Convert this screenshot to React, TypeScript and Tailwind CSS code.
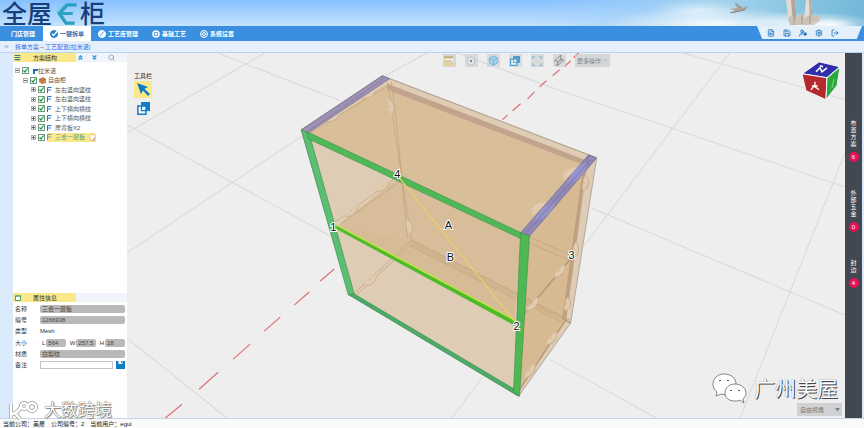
import { useState } from "react";
import {
  Box,
  ChevronDown,
  ChevronsDown,
  ChevronsUp,
  FileText,
  LogOut,
  Menu,
  Save,
  Scan,
  Search,
  Settings,
  UserCog,
} from "lucide-react";

const menuItems = ["门店管理", "一键拆单", "工艺库管理", "基础工艺", "系统设置"];

const treeItems = ["左右竖向竖纹", "左右竖向竖纹", "上下横向横纹", "上下横向横纹", "厚背板X2", "三合一层板"];

const sideTabs = [
  { label: "布置方案", count: 6 },
  { label: "外部五金", count: 0 },
  { label: "封边", count: 4 },
];

const gridLines = [
  "M218 53 341 101",
  "M266 53 128 133",
  "M128 125 331 236",
  "M303 136 128 253",
  "M128 338 228 418",
  "M428 53 386 76",
  "M457 53 547 86 845 187",
  "M730 53 585 245",
  "M683 53 845 100",
  "M592 208 845 315",
  "M845 153 740 418",
  "M550 359 657 418",
  "M483 377 452 418",
];

const axisDashes = [
  "M335 269 321 281",
  "M310 292 295 305",
  "M281 317 265 331",
  "M251 344 234 359",
  "M219 372 200 389",
  "M183 404 166 418",
  "M579 53 574 58",
  "M571 61 565 67",
  "M560 70 553 76",
  "M547 81 540 87",
  "M535 92 528 99",
  "M521 104 513 111",
  "M508 115 503 120",
];

// x, y, rotation and half length of every connector
const connectors = [
  [333, 117, -28, 9],
  [369, 94, -28, 9],
  [352, 211, -36, 9],
  [383, 186, -36, 9],
  [371, 280, -40, 8],
  [391, 107, -100, 8],
  [409, 227, -100, 7],
  [560, 271, -48, 8],
  [533, 304, -48, 9],
  [552, 338, -52, 8],
  [530, 371, -52, 9],
  [585, 183, -80, 8],
  [575, 250, -80, 8],
  [567, 304, -80, 7],
];

const marks = [
  { text: "1", x: 334, y: 230 },
  { text: "2", x: 517, y: 329 },
  { text: "3", x: 572, y: 258 },
  { text: "4", x: 398, y: 177 },
  { text: "A", x: 449, y: 228 },
  { text: "B", x: 451, y: 260 },
];

const Cabinet = () => (
  <svg className="absolute inset-0 h-full w-full" viewBox="128 53 717 365" preserveAspectRatio="xMidYMid slice">
    <g stroke="#d9d9d9" fill="none">
      {gridLines.map((d) => (
        <path key={d} d={d} />
      ))}
    </g>
    <g stroke="#e07070" strokeWidth="1.2" fill="none">
      {axisDashes.map((d) => (
        <path key={d} d={d} />
      ))}
    </g>

    {/* Outer body */}
    <path d="M302 130 383 76 597 158 571 323 519 396 350 295Z" fill="#dfccb4" stroke="#a39a96" strokeWidth="0.8" />
    <path d="M310 133 388 84 588 161 522 233Z" fill="#d9be9a" />
    <path d="M398 178 522 239 515 322 337 227Z" fill="#d8bd9a" />
    <path d="M530 237 583 174 565 321 520 388Z" fill="#d7ba91" />
    <path d="M337 227 412 241 515 293 515 325Z" fill="#d6ba95" opacity="0.6" />

    {/* Back panel */}
    <path d="M388 84 588 161 584 165 388 90Z" fill="#c2a38d" />
    <path d="M388 78 597 158" stroke="#b89f87" strokeWidth="0.6" />
    <g stroke="#c0a181" strokeWidth="0.8" fill="none" opacity="0.85">
      <path d="M388 82 412 240 570 320" />
      <path d="M392 82 398 130 408 238 M411 246 562 322" />
      <path d="M353 295 412 240 M357 295 410 246" />
      <path d="M336 222 400 175 M341 224 404 179" />
      <path d="M311 133 389 86" />
      <path d="M530 237 573 256 M530 243 571 261" />
    </g>
    <path d="M412 240 570 320 566 322 411 246Z" fill="#bd9c78" opacity="0.25" />
    <path d="M584 166 587 165 566 321 563 319Z" fill="#c0a182" stroke="#ab8f77" strokeWidth="0.4" />
    <g stroke="#b59675" strokeWidth="1.4" fill="none">
      <path d="M517 323 574 255" />
      <path d="M519 391 566 320 571 323" />
    </g>

    {connectors.map(([x, y, angle, r]) => (
      <g key={`${x}-${y}`} transform={`translate(${x} ${y}) rotate(${angle})`}>
        <path d={`M${-r} 1 Q0 8 ${r} 1Z`} fill="#cbb08e" />
        <path d={`M${-r} 0 Q-3 -3 0 -1 Q3 -3 ${r} 0 Q0 7 ${-r} 0Z`} fill="#e0cbb0" />
        <circle r="0.6" fill="#c7ab88" />
      </g>
    ))}

    {/* Side edges */}
    <path d="M302 130 383 76 390 79 309 133Z" fill="#9d92b3" stroke="#776f93" strokeWidth="0.8" />
    <path d="M383 76V80L308 132" stroke="#776f93" strokeWidth="0.5" fill="none" />
    <path d="M572 168Q562 171 564 180L583 166Z M540 203Q530 206 533 216L549 202Z" fill="#e0cbb0" />
    <path d="M521 233 589 155 597 158 530 236Z" fill="#9188b5" stroke="#716a98" strokeWidth="0.8" />
    <path d="M566 184Q576 184 585 172L588 162 578 166Z M533 221Q545 220 553 209L556 202 544 207Z" fill="#9794cb" />
    <path d="M525 235 591 160 M589 155 587 163" stroke="#716a98" strokeWidth="0.7" />

    {/* Front frame */}
    <g stroke="#3a8a4b" strokeWidth="0.6">
      <path d="M302 130 310 134 355 294 349 295Z" fill="#5bbf73" />
      <path d="M350 295 355 294 515 389 519 396Z" fill="#49ad68" />
      <path d="M308 132 522 233 522 239 309 139Z" fill="#4fb957" />
      <path d="M521 233 530 236 520 396 514 391Z" fill="#4eb852" />
    </g>
    <path d="M337 225 517 321 516 326 337 229Z" fill="#4dbb2c" />
    <path d="M337 225 517 321" stroke="#c5e83a" strokeWidth="1.3" />
    <path d="M400 178 515 321" stroke="#e8cf6a" strokeWidth="1.3" />

    <g
      className="font-['Liberation_Sans','Noto_Sans_CJK_SC',sans-serif] text-[11px]"
      fill="#111"
      stroke="#fff"
      strokeWidth="2"
      paintOrder="stroke"
      textAnchor="middle"
    >
      {marks.map((mark) => (
        <text key={mark.text} x={mark.x} y={mark.y + 1}>
          {mark.text}
        </text>
      ))}
    </g>

    {/* View cube */}
    <g stroke="#f4f4ff" strokeWidth="1" strokeLinejoin="round">
      <path d="M802 74 819 62 840 67 827 78Z" fill="#2f2fa8" />
      <path d="M802 74 827 78 826 100 806 91Z" fill="#b42a2c" />
      <path d="M827 78 840 67 837 86 826 100Z" fill="#2ba83a" />
    </g>
    <path d="M816 72 820 68 822 72 827 68 M820 66 823 67" stroke="#fff" strokeWidth="1.6" fill="none" />
    <path d="M811 90 814 86 819 90 M812 86 818 86 M815 82V88" stroke="#fff" strokeWidth="1.3" fill="none" />
    <path d="M832 88 834 79" stroke="#9be3a2" strokeWidth="0.8" />
  </svg>
);

const SkyArt = () => (
  <svg className="h-[26px] w-[330px]" viewBox="0 0 330 26" preserveAspectRatio="none">
    <defs>
      <linearGradient id="sky" x1="0" x2="1">
        <stop offset="0" stopColor="#9fd0fb" stopOpacity="0" />
        <stop offset="0.55" stopColor="#a5d3ee" />
        <stop offset="1" stopColor="#73b9d8" />
      </linearGradient>
      <radialGradient id="cloud">
        <stop offset="0" stopColor="#fff" stopOpacity="0.9" />
        <stop offset="1" stopColor="#fff" stopOpacity="0" />
      </radialGradient>
    </defs>
    <rect width="330" height="26" fill="url(#sky)" />
    <ellipse cx="180" cy="24" rx="110" ry="17" fill="url(#cloud)" />
    <ellipse cx="165" cy="10" rx="50" ry="10" fill="url(#cloud)" opacity="0.6" />
    <ellipse cx="275" cy="24" rx="70" ry="12" fill="url(#cloud)" />
    <path d="M195 9 203 8 201 3 208 8 214 6 212 10 203 12 196 13 201 10Z" fill="#a9a59c" />
    <path d="M201 3 208 8M196 13 211 10" stroke="#827e78" strokeWidth="0.8" />
    <path d="M252 0h9l2 25h-8Z" fill="#e3d9d0" />
    <path d="M257 0h4l2 25h-4Z" fill="#b3a59b" />
    <path d="M272 0h5l2 22h-9Z" fill="#e4ddd5" />
    <path d="M275 0h2l2 22h-3Z" fill="#b7aba1" />
    <path d="M254 18l4-3 4 4 5-6 4 5 5-4 3 3 6-2 1 6-6 4h-24Z" fill="#cdc1b4" />
    <path d="M260 17v8M268 15v9M276 16v8" stroke="#9b8f85" strokeWidth="0.8" />
    <ellipse cx="298" cy="25" rx="25" ry="7" fill="url(#cloud)" />
  </svg>
);

const MenuIcon = ({ index, active }: { index: number; active: boolean }) => (
  <svg
    className={`h-[8px] w-[8px] ${active ? "text-[#2484cf]" : "text-white"}`}
    viewBox="0 0 16 16"
    fill="none"
    stroke="currentColor"
    strokeWidth="2"
  >
    {index === 1 && (
      <>
        <circle cx="8" cy="8" r="7" fill="currentColor" />
        <path d="M4 7 7 11 14 3" stroke="#fff" strokeWidth="2.5" />
      </>
    )}
    {index === 2 && (
      <>
        <circle cx="8" cy="8" r="7" fill="currentColor" />
        <path d="M5 12 6 9 12 3" stroke="#3a8fe0" />
      </>
    )}
    {index === 3 && (
      <>
        <circle cx="8" cy="8" r="6" strokeWidth="3" />
        <circle cx="8" cy="8" r="2" fill="currentColor" />
      </>
    )}
    {index === 4 && (
      <>
        <circle cx="8" cy="8" r="7" />
        <circle cx="8" cy="8" r="3" />
        <path d="M8 3v2M8 11v2M3 8h2M11 8h2" />
      </>
    )}
  </svg>
);

const CopyIcon = ({ className }: { className: string }) => (
  <svg className={className} viewBox="0 0 16 16">
    <path d="M5 0h11v11H5Z" fill="#0f7cc4" />
    <path d="M1 5h10v10H1Z" fill="#eef5fb" stroke="#0f7cc4" strokeWidth="1.8" />
    <path d="M5.5 5h5.5v5.5H5.5Z" fill="#eef5fb" stroke="#0f7cc4" strokeWidth="1.5" />
  </svg>
);

const TreeCheck = ({ label }: { label: string }) => {
  const [checked, setChecked] = useState(true);
  return (
    <span className="relative h-[7px] w-[7px] shrink-0">
      <input
        type="checkbox"
        aria-label={label}
        checked={checked}
        onChange={() => setChecked(!checked)}
        className="block h-[7px] w-[7px] appearance-none border border-[#6f9a7c] bg-white"
      />
      {checked && (
        <svg className="pointer-events-none absolute inset-0 h-[7px] w-[7px]" viewBox="0 0 7 7">
          <path d="M1.5 3.5 3 5 5.5 1.5" fill="none" stroke="#159447" strokeWidth="1.2" />
        </svg>
      )}
    </span>
  );
};

const Expander = ({ open }: { open?: boolean }) => (
  <button aria-label="展开" className="flex h-[5px] w-[5px] shrink-0 items-center justify-center border border-[#b0b0b0] bg-white">
    <svg viewBox="0 0 5 5" className="h-[5px] w-[5px] shrink-0">
      <path d={open ? "M1 2.5h3" : "M1 2.5h3M2.5 1v3"} stroke="#666" />
    </svg>
  </button>
);

const fieldClass = "h-[8px] min-w-0 rounded-[2px] bg-[#b9b9b9] px-[2px] text-[6px] leading-none text-[#444]";

const App = () => {
  const [activeMenu, setActiveMenu] = useState(1);
  const [selected, setSelected] = useState(5);

  return (
    <div className="flex min-h-screen flex-col bg-[#dcebfc] font-['Liberation_Sans','Noto_Sans_CJK_SC',sans-serif] text-[6px] leading-none text-[#333]">
      {/* Banner */}
      <header className="flex h-[26px] items-center justify-between bg-gradient-to-b from-[#86c0fe] to-[#c4e2fd]">
        <h1 className="flex items-center pl-[2px] pt-[2px] text-[25px] font-medium leading-[24px] text-[#173f7c]">
          <span>全屋</span>
          <svg className="ml-[3px] mr-px h-[22px] w-[24px]" viewBox="0 0 24 23" role="img" aria-label="E">
            <path d="M2 11 12 1H8L1 9Z" fill="#7cc8e0" />
            <path d="M22 2H12L4 11 11 21H20" fill="none" stroke="#2a9fc0" strokeWidth="3.5" />
            <path d="M6 11H18" stroke="#2a9fc0" strokeWidth="3" />
          </svg>
          <span>柜</span>
        </h1>
        <SkyArt />
      </header>

      {/* Main menu */}
      <nav className="flex h-[15px] justify-between bg-[#3a8fe0]">
        <div className="flex">
          {menuItems.map((item, index) => (
            <button
              key={item}
              onClick={() => setActiveMenu(index)}
              className={`flex items-center gap-[2px] font-bold ${index === 0 ? "pl-[11px] pr-[8px]" : "px-[7px]"} ${
                activeMenu === index ? "bg-white text-[#2b6fb5]" : "text-white"
              }`}
            >
              {index > 0 && <MenuIcon index={index} active={activeMenu === index} />}
              {item}
            </button>
          ))}
        </div>
        <div className="mr-[2px] flex h-[13px] w-[105px] items-center gap-[8px] bg-[#e4effc] pl-[10px] text-[#2378bd] [clip-path:polygon(0_0,100%_0,95%_100%,5%_100%)]">
          <button aria-label="文档"><FileText className="h-[8px] w-[8px]" strokeWidth={2.5} /></button>
          <button aria-label="保存"><Save className="h-[8px] w-[8px]" strokeWidth={2.5} /></button>
          <button aria-label="用户"><UserCog className="h-[8px] w-[8px]" strokeWidth={3} /></button>
          <button aria-label="设置"><Settings className="h-[8px] w-[8px]" strokeWidth={3} /></button>
          <button aria-label="退出"><LogOut className="h-[8px] w-[8px]" strokeWidth={2.5} /></button>
        </div>
      </nav>

      <div className="flex h-[12px] items-center border-b border-[#bcd3ee] bg-[#e6f0fd]">
        <button aria-label="展开侧栏" className="w-[13px] text-[8px] text-[#7aa7d8]">»</button>
        <div className="flex items-center pl-[2px] text-[#3b62e0]">
          <a href="#plan">拆单方案</a>
          <span className="text-black">→</span>
          <a href="#craft">工艺配置[拉米诺]</a>
        </div>
      </div>

      <main className="flex flex-1">
        {/* Left panel */}
        <aside className="relative ml-[13px] flex w-[114px] shrink-0 flex-col bg-white">
          <section className="flex-1">
            <div className="flex h-[9px] items-center bg-[#f1f5fb]">
              <h2 className="flex h-full w-[63px] items-center gap-[12px] bg-[#fbe88a] pl-px">
                <Menu className="h-[7px] w-[7px] text-[#267f8f]" strokeWidth={4} />
                方案结构
              </h2>
              <button aria-label="收起" className="ml-px"><ChevronsUp className="h-[7px] w-[7px] text-[#2795dd]" strokeWidth={4} /></button>
              <button aria-label="展开" className="ml-[7px]"><ChevronsDown className="h-[7px] w-[7px] text-[#2795dd]" strokeWidth={4} /></button>
              <button aria-label="搜索" className="ml-[10px]"><Search className="h-[7px] w-[7px] text-[#a0a0a0]" strokeWidth={3} /></button>
            </div>
            <ul className="mt-[4px] grid h-[76px] auto-rows-fr text-[#555]">
              <li className="flex items-center gap-[2px] pl-[2px]">
                <Expander open />
                <TreeCheck label="拉米诺" />
                <span className="flex items-center">
                  <svg className="ml-[2px] h-[6px] w-[5px]" viewBox="0 0 5 6"><path d="M0 1h5v2H2v3H0Z" fill="#1670c4" /></svg>
                  拉米诺
                </span>
              </li>
              <li className="flex items-center gap-[2px] pl-[10px]">
                <Expander open />
                <TreeCheck label="自由柜" />
                <svg className="h-[7px] w-[7px]" viewBox="0 0 7 7"><path d="M0 2 4 0 7 2v4L3 7 0 5Z" fill="#c98b4b" /><path d="M0 2 3 3 7 2M3 3v4" stroke="#8e5a2a" strokeWidth="0.5" fill="none" /></svg>
                自由柜
              </li>
              {treeItems.map((item, index) => (
                <li key={index} className="flex items-center gap-[2px] pl-[18px]">
                  <Expander />
                  <TreeCheck label={item} />
                  <button
                    onClick={() => setSelected(index)}
                    className={`flex h-full items-center gap-[3px] ${selected === index ? "bg-[#fbe88a] text-[#5e9c80]" : ""}`}
                  >
                    <svg className="h-[6px] w-[5px]" viewBox="0 0 5 6"><path d="M.5 6V.5H4.5M.5 3H4" fill="none" stroke={selected === index ? "#7c93a8" : "#2a6fd8"} /></svg>
                    {item}
                    {selected === index && (
                      <svg className="ml-px h-[7px] w-[7px]" viewBox="0 0 7 7"><path d="M1 .5h3l2 2v4H1Z" fill="#fff" stroke="#d9a77a" strokeWidth="0.6" /><path d="M3.5 6.5 6 4" stroke="#d86a4a" /></svg>
                    )}
                  </button>
                </li>
              ))}
            </ul>
          </section>

          <section className="h-[125px]">
            <div className="h-[9px] bg-[#f1f5fb]">
              <h2 className="flex h-full w-[63px] items-center gap-[12px] bg-[#fbe88a] pl-[2px]">
                <svg className="h-[6px] w-[6px]" viewBox="0 0 6 6"><path d="M.5 1h5v4.5h-5Z" fill="#fff" stroke="#49a05b" /><path d="M0 1h6" stroke="#49a05b" /></svg>
                属性信息
              </h2>
            </div>
            <form className="mt-px grid h-[68px] auto-rows-fr grid-cols-1 px-[2px]">
              <label className="flex items-center"><span className="w-[25px] shrink-0">名称</span><input className={`${fieldClass} flex-1`} defaultValue="三合一层板" /></label>
              <label className="flex items-center"><span className="w-[25px] shrink-0">编号</span><input className={`${fieldClass} flex-1`} defaultValue="1266938" /></label>
              <div className="flex items-center"><span className="w-[25px] shrink-0">类型</span><span>Mesh</span></div>
              <div className="flex items-center">
                <span className="w-[25px] shrink-0">大小</span>
                <div className="flex flex-1 justify-between pl-[2px]">
                  <label className="flex items-center gap-px">L<input className={`${fieldClass} w-[20px]`} defaultValue="564" /></label>
                  <label className="flex items-center gap-px">W<input className={`${fieldClass} w-[20px]`} defaultValue="257.5" /></label>
                  <label className="flex items-center gap-px">H<input className={`${fieldClass} w-[20px]`} defaultValue="18" /></label>
                </div>
              </div>
              <label className="flex items-center"><span className="w-[25px] shrink-0">材质</span><input className={`${fieldClass} flex-1`} defaultValue="白梨纹" /></label>
              <div className="flex items-center">
                <label htmlFor="remark" className="w-[25px] shrink-0">备注</label>
                <input id="remark" className="h-[8px] min-w-0 flex-1 border border-[#c4c4c4] bg-white" />
                <button type="button" aria-label="保存备注" className="ml-[3px] shrink-0">
                  <svg className="h-[8px] w-[9px]" viewBox="0 0 9 8"><path d="M0 0h9v8H0Z" fill="#0f7cc4" /><path d="M2.5 0h4v3h-4Z" fill="#fff" /><path d="M5 0h1v2H5Z" fill="#0f7cc4" /></svg>
                </button>
              </div>
            </form>
          </section>

          {/* Brand mark over the panel */}
          <div className="pointer-events-none absolute -bottom-[3px] -left-[4px] z-10 flex items-center gap-[6px] whitespace-nowrap text-[17px] leading-[20px] text-white [text-shadow:0_0_1px_#666,0_0_1px_#666,1px_1px_1px_#888]">
            <svg className="h-[20px] w-[29px] overflow-visible" viewBox="0 0 29 20" fill="none">
              <g stroke="#999" strokeWidth="4">
                <path d="M2 3v14M3 13C9 12 11 8 12 5M6 12l5 6" />
                <circle cx="15" cy="5" r="3" /><circle cx="23" cy="6" r="4" />
              </g>
              <g stroke="#fff" strokeWidth="2.5">
                <path d="M2 3v14M3 13C9 12 11 8 12 5M6 12l5 6" />
                <circle cx="15" cy="5" r="3" /><circle cx="23" cy="6" r="4" />
              </g>
            </svg>
            大数跨境
          </div>
        </aside>

        {/* 3D view */}
        <section className="relative min-w-0 flex-1 overflow-hidden bg-[#eeeeee]">
          <Cabinet />

          <div className="absolute left-[7px] top-[20px] flex w-[18px] flex-col items-center gap-[2px]">
            <span className="whitespace-nowrap text-[#222]">工具栏</span>
            <button aria-label="选择" className="flex h-[17px] w-[18px] items-center justify-center bg-[#fbe88a]">
              <svg className="h-[13px] w-[13px]" viewBox="0 0 13 13"><path d="M0 0 11 4 7.5 6 13 11 11 13 6 7.5 4 11Z" fill="#0f7cc4" /></svg>
            </button>
            <button aria-label="复制" className="flex h-[17px] w-[18px] items-center justify-center">
              <CopyIcon className="h-[13px] w-[13px]" />
            </button>
          </div>

          <div className="absolute left-[44%] top-px flex gap-[9px] text-[#6aa9cc] opacity-70">
            <button aria-label="打开" className="flex h-[13px] w-[13px] items-center justify-center rounded-[1px] bg-[#cdcfcb]">
              <svg className="h-[10px] w-[10px]" viewBox="0 0 10 10"><path d="M0 1h9v9H0Z" fill="#e3c978" /><path d="M1 3h8v3H1Z" fill="#fff" /><path d="M0 1h9M1 5h7" stroke="#8a7744" /></svg>
            </button>
            <button aria-label="定位" className="flex h-[13px] w-[13px] items-center justify-center rounded-[1px] bg-[#cdd3d3]">
              <svg className="h-[10px] w-[10px]" viewBox="0 0 10 10"><circle cx="5" cy="5" r="4" fill="#e5e8e8" stroke="#9aa9b0" strokeWidth="0.8" /><circle cx="5" cy="5" r="1.2" fill="#557" /></svg>
            </button>
            <button aria-label="模型" className="flex h-[13px] w-[13px] items-center justify-center rounded-[1px] bg-[#cdd3d3]">
              <Box className="h-[11px] w-[11px] fill-[#8cc9ea] text-[#369bd0]" />
            </button>
            <button aria-label="复制视图" className="flex h-[13px] w-[13px] items-center justify-center rounded-[1px] bg-[#cdd3d3]">
              <CopyIcon className="h-[10px] w-[10px]" />
            </button>
            <button aria-label="全屏" className="flex h-[13px] w-[13px] items-center justify-center rounded-[1px] bg-[#cdd3d3]">
              <Scan className="h-[12px] w-[12px]" strokeWidth={2.5} />
            </button>
            <button aria-label="切割" className="flex h-[13px] w-[13px] items-center justify-center rounded-[1px] bg-[#cdd3d3]">
              <svg className="h-[12px] w-[12px]" viewBox="0 0 12 12" fill="none" stroke="#666"><path d="M8 0 1 6H5L4 11 11 5H7L8 0M3 10 9 3" /></svg>
            </button>
            <button className="flex h-[13px] items-center gap-[2px] rounded-[1px] bg-[#cbcdcd] px-[2px] text-[#555]">
              更多操作
              <ChevronDown className="h-[5px] w-[5px] text-[#4a94b5]" strokeWidth={3} />
            </button>
          </div>

          <div className="absolute bottom-[2px] right-[3px]">
            <select aria-label="视角" className="block h-[13px] w-[45px] appearance-none bg-[#d0d1d2] pl-[3px] text-[6px] text-[#777]">
              <option>自由视角</option>
            </select>
            <svg className="pointer-events-none absolute right-[2px] top-[5px] h-[4px] w-[5px]" viewBox="0 0 5 4"><path d="M0 0h5L2.5 3.5Z" fill="#70849a" /></svg>
          </div>

          <div className="pointer-events-none absolute bottom-[13px] right-[7px] flex items-center gap-[7px] text-[21px] leading-[32px] text-white [text-shadow:1px_1px_0_#444,0_0_1px_#777]">
            <svg className="h-[32px] w-[35px]" viewBox="0 0 35 32" fill="#fff" stroke="#555" strokeWidth="0.7">
              <path d="M12 1C5 1 1 6 1 11c0 4 2 6 4 8l-1 4 5-2c3 1 6 1 8 0 5-2 7-6 7-10C24 5 19 1 12 1Z" />
              <path d="M23 11c-6 0-10 4-10 9s4 8 10 8c2 0 4 0 5-1l4 3-1-4c2-2 3-4 3-6 0-5-5-9-11-9Z" />
              <path d="M7 8q1-2 2 0M15 8q1-2 2 0M18 18q1-2 2 0M26 18q1-2 2 0" fill="none" strokeWidth="1" />
            </svg>
            广州美屋
          </div>
        </section>

        {/* Right bar */}
        <aside className="mr-[2px] flex w-[17px] shrink-0 flex-col items-center gap-7 bg-[#414852] pt-[67px] text-white">
          {sideTabs.map((tab) => (
            <button key={tab.label} className="flex flex-col items-center gap-[4px]">
              <span className="w-[6px] break-all leading-[7px]">{tab.label}</span>
              <span className="flex h-[10px] w-[10px] items-center justify-center rounded-full bg-[#e8125c]">{tab.count}</span>
            </button>
          ))}
        </aside>
      </main>

      <footer className="flex h-[10px] items-center gap-[6px] border-t border-[#c6d6e8] bg-[#fafafa] pl-[3px] text-[#222]">
        <span>当前公司：美屋</span>
        <span>公司编号：2</span>
        <span>当前用户：egui</span>
      </footer>
    </div>
  );
};

export default App;
